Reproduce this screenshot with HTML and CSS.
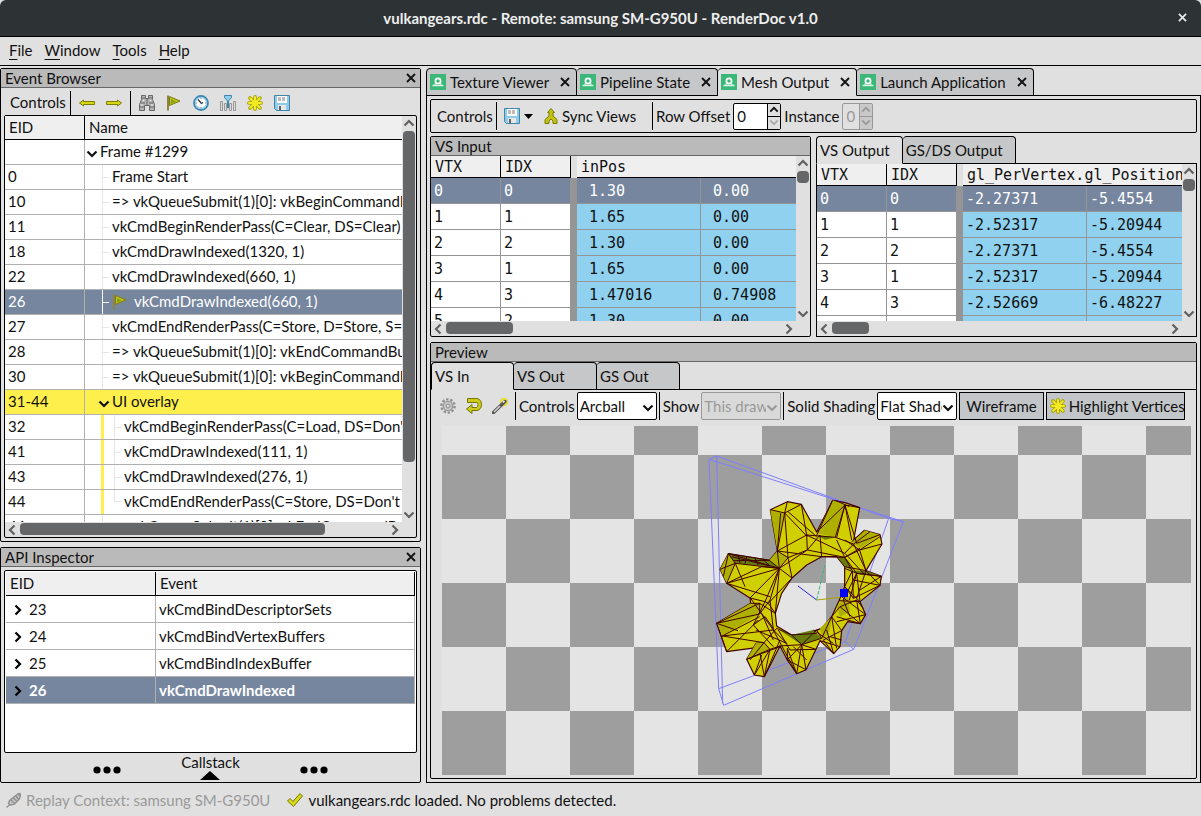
FILE: index.html
```
<!DOCTYPE html>
<html lang="en">
<head>
<meta charset="utf-8">
<title>vulkangears.rdc - Remote: samsung SM-G950U - RenderDoc v1.0</title>
<link rel="stylesheet" href="styles.css">
</head>
<body>
<svg class="defs" aria-hidden="true">
  <symbol id="x" viewBox="0 0 10 10"><path d="M1 1l8 8M9 1L1 9" fill="none" stroke="currentColor" stroke-width="1.8"/></symbol>
  <symbol id="down" viewBox="0 0 12 8"><path d="M1.500 1.500L6 6l4.500-4.500" fill="none" stroke="currentColor" stroke-width="2.200"/></symbol>
  <symbol id="up" viewBox="0 0 12 8"><path d="M1.500 6.500L6 2l4.500 4.500" fill="none" stroke="currentColor" stroke-width="2.200"/></symbol>
  <symbol id="left" viewBox="0 0 8 12"><path d="M6.500 1.500L2 6l4.500 4.500" fill="none" stroke="currentColor" stroke-width="2.200"/></symbol>
  <symbol id="right" viewBox="0 0 8 12"><path d="M1.500 1.500L6 6l-4.500 4.500" fill="none" stroke="currentColor" stroke-width="2.200"/></symbol>
  <symbol id="arrow-l" viewBox="0 0 16 16"><path d="M.5 8L4.500 5v1.500h11v3h-11V11z" fill="#d6d614" stroke="#7d7d00"/></symbol>
  <symbol id="arrow-r" viewBox="0 0 16 16"><path d="M15.500 8L11.500 5v1.500H.5v3h11V11z" fill="#d6d614" stroke="#7d7d00"/></symbol>
  <symbol id="find" viewBox="0 0 16 16"><path d="M2.500.5h4v3h3v-3h4v4l2 5v6h-5v-5h-5v5h-5v-6l2-5z" fill="#b5b5b5" stroke="#666"/><path d="M3 3h3M10 3h3M2 8h4M10 8h4M1 12h4M11 12h4M8 4v6" stroke="#666" fill="none"/><path d="M2 10h2M12 10h2M4 5.500h1M11 5.500h1" stroke="#eee"/></symbol>
  <symbol id="flag" viewBox="0 0 16 16"><path d="M3.500 1.500l10.500 4.500-10.500 4.500z" fill="#bfc21a" stroke="#7e7d10"/><path d="M5 4l5 2.500L5 9z" fill="#8aa016"/><path d="M2 .5v15" stroke="#8c8440" stroke-width="2"/></symbol>
  <symbol id="clock" viewBox="0 0 16 16"><circle cx="8" cy="8" r="7" fill="#fff" stroke="#3d86b0" stroke-width="1.800"/><circle cx="8" cy="8" r="5.600" fill="none" stroke="#8dc8e4" stroke-width="1.200"/><path d="M5 4.500l3.500 4M8.500 8.500l1.500-1" stroke="#333" stroke-width="1.200"/><path d="M8 3v1M8 12v1M3 8h1M12 8h1" stroke="#888"/></symbol>
  <symbol id="bars" viewBox="0 0 16 16"><path d="M.5 15.500v-9h2v9zM4.500 15.500v-7h2v7zM9.500 15.500v-7h2v7zM13.500 15.500v-9h2v9z" fill="#ddd" stroke="#999"/><path d="M4.500.5h7v2L8.500 6v7h-1V6l-3-3.500z" fill="#8dd0ee" stroke="#3c84ab"/></symbol>
  <symbol id="star" viewBox="0 0 16 16"><g stroke-linecap="round"><path d="M8 1.800v12.400M1.800 8h12.400M3 3l10 10M13 3L3 13" stroke="#a7a300" stroke-width="3.600"/><path d="M8 2v12M2 8h12M3.200 3.200l9.600 9.600M12.800 3.200l-9.600 9.600" stroke="#f2ea22" stroke-width="2"/></g></symbol>
  <symbol id="save" viewBox="0 0 16 16"><path d="M.5.5h15v15h-13l-2-2z" fill="#8dcbe8" stroke="#3f86ad"/><path d="M3 1h10v7H3z" fill="#fff"/><path d="M4 3h8M4 5h8" stroke="#777" stroke-dasharray="3 1"/><path d="M4 10h8v5H4z" fill="#e8e8e8"/><path d="M5 11h2v4H5z" fill="#59606a"/></symbol>
  <symbol id="sync" viewBox="0 0 14 16"><path d="M7 .5l3.500 4H9v3.500l4 3.500v4h-4V13l-2-2-2 2v2.500H1v-4L5 8V4.500H3.500z" fill="#c2c212" stroke="#7d7d00"/></symbol>
  <symbol id="gear" viewBox="0 0 16 16"><circle cx="8" cy="8" r="6.600" fill="none" stroke="#8f8f8f" stroke-width="2.400" stroke-dasharray="2.400 1.750"/><circle cx="8" cy="8" r="4.600" fill="#ccc" stroke="#999" stroke-width="1.400"/><circle cx="8" cy="8" r="2" fill="#ddd" stroke="#888"/></symbol>
  <symbol id="reset" viewBox="0 0 16 16"><path d="M1.500.5H11Q15.500 1.500 15.500 6.500T11 12.500H6v3L.5 11 6 6.500v3h4.500Q12 9 12 6.500T10.500 4.500h-9z" fill="#cccb1c" stroke="#777600"/></symbol>
  <symbol id="wand" viewBox="0 0 16 16"><circle cx="12" cy="4" r="3.400" fill="#eee8a0" stroke="#e8de20" stroke-width="1.600"/><path d="M1.500 14.500L13 3.500" stroke="#555" stroke-width="3.400" stroke-linecap="round"/><path d="M2 14L8 8.200" stroke="#ccc" stroke-width="1.600"/><path d="M11 4.500L12.500 3" stroke="#eee" stroke-width="1.600"/></symbol>
  <symbol id="plug" viewBox="0 0 16 16"><path d="M.5 15.500L4 12.500M3.500 8.500L9 4l3.500-2.500 2 1.500-1 4L8 12.500l-4 .5-1.500-1.500zM12.500 3.500l2-2.500M5 8l4 4M7.500 6l4 4M10 4l3 4" fill="#c4c4c4" stroke="#909090" stroke-width="1.300"/></symbol>
  <symbol id="tick" viewBox="0 0 16 16"><path d="M.5 9L3 6.500l3 3 7-8L15.500 4 6.500 14.500z" fill="#d8d81a" stroke="#777600"/></symbol>
  <symbol id="app" viewBox="0 0 16 16"><path d="M0 0h16v16H0z" fill="#3bb878"/><circle cx="8" cy="7" r="2.600" fill="none" stroke="#fff" stroke-width="1.700"/><path d="M2.500 11.500h11M4.500 10.500l1.500-1M11.500 10.500L10 9.500" stroke="#d8f3e5" stroke-width="1.300"/></symbol>
</svg>

<header class="titlebar">
  <h1>vulkangears.rdc - Remote: samsung SM-G950U - RenderDoc v1.0</h1>
  <button class="plain win-close" aria-label="Close window"><svg><use href="#x"/></svg></button>
</header>
<nav class="menubar">
  <button class="plain"><u>F</u>ile</button>
  <button class="plain"><u>W</u>indow</button>
  <button class="plain"><u>T</u>ools</button>
  <button class="plain"><u>H</u>elp</button>
</nav>

<main class="workspace">
  <div class="left">
    <section class="panel">
      <header class="panel-head"><h2>Event Browser</h2><button class="plain" aria-label="Close Event Browser"><svg class="ic-x"><use href="#x"/></svg></button></header>
      <div class="tools event-tools">
        <span class="label">Controls</span>
        <span class="group"><button class="plain" aria-label="Previous"><svg class="ic"><use href="#arrow-l"/></svg></button><button class="plain" aria-label="Next"><svg class="ic"><use href="#arrow-r"/></svg></button></span>
        <span class="group"><button class="plain" aria-label="Find"><svg class="ic"><use href="#find"/></svg></button><button class="plain" aria-label="Go to event"><svg class="ic"><use href="#flag"/></svg></button><button class="plain" aria-label="Time drawcalls"><svg class="ic"><use href="#clock"/></svg></button><button class="plain" aria-label="Columns"><svg class="ic"><use href="#bars"/></svg></button><button class="plain" aria-label="Bookmark"><svg class="ic"><use href="#star"/></svg></button><button class="plain" aria-label="Export"><svg class="ic"><use href="#save"/></svg></button></span>
      </div>
      <div class="scroller boxed event-box">
        <div class="clip">
          <table class="events">
            <colgroup><col class="c-eid"><col></colgroup>
            <thead><tr><th>EID</th><th>Name</th></tr></thead>
            <tbody>
              <tr><td></td><td><div class="name root"><svg class="chev"><use href="#down"/></svg><span>Frame #1299</span></div></td></tr>
              <tr><td>0</td><td><div class="name"><i class="guide"></i><span>Frame Start</span></div></td></tr>
              <tr><td>10</td><td><div class="name"><i class="guide"></i><span>=&gt; vkQueueSubmit(1)[0]: vkBeginCommandBuffer</span></div></td></tr>
              <tr><td>11</td><td><div class="name"><i class="guide"></i><span>vkCmdBeginRenderPass(C=Clear, DS=Clear)</span></div></td></tr>
              <tr><td>18</td><td><div class="name"><i class="guide"></i><span>vkCmdDrawIndexed(1320, 1)</span></div></td></tr>
              <tr><td>22</td><td><div class="name"><i class="guide"></i><span>vkCmdDrawIndexed(660, 1)</span></div></td></tr>
              <tr class="sel"><td>26</td><td><div class="name"><i class="guide"></i><svg class="ic"><use href="#flag"/></svg><span>vkCmdDrawIndexed(660, 1)</span></div></td></tr>
              <tr><td>27</td><td><div class="name"><i class="guide"></i><span>vkCmdEndRenderPass(C=Store, D=Store, S=Store)</span></div></td></tr>
              <tr><td>28</td><td><div class="name"><i class="guide"></i><span>=&gt; vkQueueSubmit(1)[0]: vkEndCommandBuffer</span></div></td></tr>
              <tr><td>30</td><td><div class="name"><i class="guide"></i><span>=&gt; vkQueueSubmit(1)[0]: vkBeginCommandBuffer</span></div></td></tr>
              <tr class="marker"><td>31-44</td><td><div class="name branch"><svg class="chev"><use href="#down"/></svg><span>UI overlay</span></div></td></tr>
              <tr class="in-marker"><td>32</td><td><div class="name child"><i class="guide"></i><span>vkCmdBeginRenderPass(C=Load, DS=Don't Care)</span></div></td></tr>
              <tr class="in-marker"><td>41</td><td><div class="name child"><i class="guide"></i><span>vkCmdDrawIndexed(111, 1)</span></div></td></tr>
              <tr class="in-marker"><td>43</td><td><div class="name child"><i class="guide"></i><span>vkCmdDrawIndexed(276, 1)</span></div></td></tr>
              <tr class="in-marker"><td>44</td><td><div class="name child last"><i class="guide"></i><span>vkCmdEndRenderPass(C=Store, DS=Don't Care)</span></div></td></tr>
              <tr><td>46</td><td><div class="name"><i class="guide"></i><span>=&gt; vkQueueSubmit(1)[0]: vkEndCommandBuffer</span></div></td></tr>
            </tbody>
          </table>
        </div>
        <div class="vbar"><svg class="ar"><use href="#up"/></svg><div class="track"><div class="thumb" style="height:88%"></div></div><svg class="ar"><use href="#down"/></svg></div>
        <div class="hbar"><svg class="ah"><use href="#left"/></svg><div class="track"><div class="thumb" style="width:83%"></div></div><svg class="ah"><use href="#right"/></svg></div>
      </div>
    </section>

    <section class="panel">
      <header class="panel-head"><h2>API Inspector</h2><button class="plain" aria-label="Close API Inspector"><svg class="ic-x"><use href="#x"/></svg></button></header>
      <div class="boxed api-box">
        <table class="api">
          <colgroup><col class="c-api"><col></colgroup>
          <thead><tr><th>EID</th><th>Event</th></tr></thead>
          <tbody>
            <tr><td><svg class="chev-r"><use href="#right"/></svg>23</td><td>vkCmdBindDescriptorSets</td></tr>
            <tr><td><svg class="chev-r"><use href="#right"/></svg>24</td><td>vkCmdBindVertexBuffers</td></tr>
            <tr><td><svg class="chev-r"><use href="#right"/></svg>25</td><td>vkCmdBindIndexBuffer</td></tr>
            <tr class="sel"><td><svg class="chev-r"><use href="#right"/></svg>26</td><td>vkCmdDrawIndexed</td></tr>
          </tbody>
        </table>
      </div>
      <button class="plain callstack">
        <svg class="dots" viewBox="0 0 28 8"><circle cx="4" cy="4" r="3.600"/><circle cx="14" cy="4" r="3.600"/><circle cx="24" cy="4" r="3.600"/></svg>
        <span class="cs-mid">Callstack<svg class="tri" viewBox="0 0 20 9"><path d="M0 9L10 0l10 9z"/></svg></span>
        <svg class="dots" viewBox="0 0 28 8"><circle cx="4" cy="4" r="3.600"/><circle cx="14" cy="4" r="3.600"/><circle cx="24" cy="4" r="3.600"/></svg>
      </button>
    </section>
  </div>

  <div class="right">
    <div class="tabs dock-tabs">
      <div class="tab"><button class="plain"><svg class="ic"><use href="#app"/></svg>Texture Viewer</button><button class="plain" aria-label="Close Texture Viewer"><svg class="ic-x"><use href="#x"/></svg></button></div>
      <div class="tab"><button class="plain"><svg class="ic"><use href="#app"/></svg>Pipeline State</button><button class="plain" aria-label="Close Pipeline State"><svg class="ic-x"><use href="#x"/></svg></button></div>
      <div class="tab active"><button class="plain"><svg class="ic"><use href="#app"/></svg>Mesh Output</button><button class="plain" aria-label="Close Mesh Output"><svg class="ic-x"><use href="#x"/></svg></button></div>
      <div class="tab"><button class="plain"><svg class="ic"><use href="#app"/></svg>Launch Application</button><button class="plain" aria-label="Close Launch Application"><svg class="ic-x"><use href="#x"/></svg></button></div>
    </div>
    <div class="pane">
      <div class="tools mesh-tools">
        <span class="label">Controls</span>
        <span class="group views"><button class="plain save-menu" aria-label="Export"><svg class="ic"><use href="#save"/></svg><svg class="caret" viewBox="0 0 9 5"><path d="M0 0h9L4.500 5z"/></svg></button><button class="plain sync"><svg class="ic"><use href="#sync"/></svg>Sync Views</button></span>
        <span class="group rows">
          <label for="row-offset">Row Offset</label>
          <span class="spin row-spin"><input id="row-offset" type="text" value="0"><span class="steps"><button class="plain" aria-label="Increase row offset"><svg><use href="#up"/></svg></button><button class="plain faint" aria-label="Decrease row offset"><svg><use href="#down"/></svg></button></span></span>
          <label for="instance">Instance</label>
          <span class="spin inst-spin off"><input id="instance" type="text" value="0" disabled><span class="steps"><button class="plain" disabled aria-label="Increase instance"><svg><use href="#up"/></svg></button><button class="plain" disabled aria-label="Decrease instance"><svg><use href="#down"/></svg></button></span></span>
        </span>
      </div>

      <div class="buffers">
        <section class="panel">
          <header class="panel-head"><h2>VS Input</h2></header>
          <div class="scroller">
            <div class="clip">
              <table class="mesh">
                <colgroup><col class="c-id"><col class="c-id"><col class="c-bar"><col class="c-val"><col class="c-val"></colgroup>
                <thead><tr><th>VTX</th><th>IDX</th><th class="bar"></th><th colspan="2">inPos</th></tr></thead>
                <tbody>
                  <tr class="sel"><td>0</td><td>0</td><td class="bar"></td><td> 1.30</td><td> 0.00</td></tr>
                  <tr><td>1</td><td>1</td><td class="bar"></td><td> 1.65</td><td> 0.00</td></tr>
                  <tr><td>2</td><td>2</td><td class="bar"></td><td> 1.30</td><td> 0.00</td></tr>
                  <tr><td>3</td><td>1</td><td class="bar"></td><td> 1.65</td><td> 0.00</td></tr>
                  <tr><td>4</td><td>3</td><td class="bar"></td><td> 1.47016</td><td> 0.74908</td></tr>
                  <tr><td>5</td><td>2</td><td class="bar"></td><td> 1.30</td><td> 0.00</td></tr>
                </tbody>
              </table>
            </div>
            <div class="vbar"><svg class="ar"><use href="#up"/></svg><div class="track"><div class="thumb"></div></div><svg class="ar"><use href="#down"/></svg></div>
            <div class="hbar"><svg class="ah"><use href="#left"/></svg><div class="track"><div class="thumb" style="width:20%"></div></div><svg class="ah"><use href="#right"/></svg></div>
          </div>
        </section>
        <section class="tabbed">
          <div class="tabs out-tabs"><button class="tab active">VS Output</button><button class="tab">GS/DS Output</button></div>
          <div class="scroller tab-body">
            <div class="clip">
              <table class="mesh">
                <colgroup><col class="c-id"><col class="c-id"><col class="c-bar"><col class="c-val"><col class="c-val"></colgroup>
                <thead><tr><th>VTX</th><th>IDX</th><th class="bar"></th><th colspan="2">gl_PerVertex.gl_Position</th></tr></thead>
                <tbody>
                  <tr class="sel"><td>0</td><td>0</td><td class="bar"></td><td>-2.27371</td><td>-5.4554</td></tr>
                  <tr><td>1</td><td>1</td><td class="bar"></td><td>-2.52317</td><td>-5.20944</td></tr>
                  <tr><td>2</td><td>2</td><td class="bar"></td><td>-2.27371</td><td>-5.4554</td></tr>
                  <tr><td>3</td><td>1</td><td class="bar"></td><td>-2.52317</td><td>-5.20944</td></tr>
                  <tr><td>4</td><td>3</td><td class="bar"></td><td>-2.52669</td><td>-6.48227</td></tr>
                  <tr><td></td><td></td><td class="bar"></td><td></td><td></td></tr>
                </tbody>
              </table>
            </div>
            <div class="vbar"><svg class="ar"><use href="#up"/></svg><div class="track"><div class="thumb"></div></div><svg class="ar"><use href="#down"/></svg></div>
            <div class="hbar"><svg class="ah"><use href="#left"/></svg><div class="track"><div class="thumb" style="width:11%"></div></div><svg class="ah"><use href="#right"/></svg></div>
          </div>
        </section>
      </div>

      <section class="panel preview">
        <header class="panel-head"><h2>Preview</h2></header>
        <div class="tabs pre-tabs"><button class="tab active">VS In</button><button class="tab">VS Out</button><button class="tab">GS Out</button></div>
        <div class="tools pre-tools">
          <span class="icons"><button class="plain" aria-label="Options"><svg class="ic"><use href="#gear"/></svg></button><button class="plain" aria-label="Reset camera"><svg class="ic"><use href="#reset"/></svg></button><button class="plain" aria-label="Auto-fit"><svg class="ic"><use href="#wand"/></svg></button></span>
          <span class="group"><label for="cam">Controls</label><span class="pick"><select id="cam"><option>Arcball</option></select><svg><use href="#down"/></svg></span></span>
          <span class="group"><label for="show">Show</label><span class="pick off"><select id="show" disabled><option>This draw</option></select><svg><use href="#down"/></svg></span></span>
          <span class="group"><label for="shade">Solid Shading</label><span class="pick"><select id="shade"><option>Flat Shaded</option></select><svg><use href="#down"/></svg></span></span>
          <button class="toggle">Wireframe</button>
          <button class="toggle wide"><svg class="ic"><use href="#star"/></svg>Highlight Vertices</button>
        </div>
        <div class="viewport">
          <svg class="scene" viewBox="0 0 749 349" role="img" aria-label="Gear mesh preview">
            <g transform="translate(248 14) scale(.33333)" stroke-linejoin="round" fill="none">
              <g stroke="#7d7dff" stroke-width="3">
                <path d="M57 58L80 48 596 235 640 245 491 628 101 796 86 746 57 58M57 58L640 245M80 48L98 790M596 235L466 605 491 628M466 605L86 746"/>
              </g>
              <path fill="#d0cf00" fill-rule="evenodd" stroke="#400000" stroke-width="3.500" d="M241 209L292 185 334 193 380 276 428 181 465 188 509 203 491 300 523 271 570 284 576 312 528 392 574 409 570 436 510 485 527 524 511 551 473 545 455 572 450 620 431 641 390 602 378 628 348 689 320 701 292 660 270 618 223 710 193 705 170 658 198 610 222 608 205 622 110 635 80 550 182 490 180 474 110 430 90 388 115 341 238 361 262 333ZM395 350L350 375 306 414 275 460 256 520 260 558 305 585 350 580 395 565 425 530 447 482 464 440 464 380 440 350Z"/>
              <g fill="#aeb000">
                <path d="M241 209L284 219 262 333zM428 181L465 195 436 292 380 280zM80 550L182 490 209 490 209 522 97 588zM170 658L198 610 222 608 240 628zM90 388L115 341 136 370 110 430zM485 305L523 271 570 284 510 325zM440 500L473 460 480 515 450 530zM390 565L425 530 420 570 400 600zM238 361L262 333 292 350 268 385z"/>
              </g>
              <g fill="#677c0a">
                <path d="M115 341L238 361 268 385 136 370zM441 350L464 352 487 392 528 392 574 409 500 400 466 380zM265 568L305 585 370 570 395 595 335 614zM380 285L436 292 405 299z"/>
              </g>
              <path stroke="#400000" stroke-width="3" d="M115 341L268 385M125 350L240 378M130 362L238 361M145 347L150 369M170 351L165 371M195 355L205 376M220 359L240 378M241 209L284 219 334 193M292 185L284 219 262 333M284 219L294 353M284 219L352 290M272 220L262 333M334 193L350 285M294 215L380 290M262 333L350 285 436 292 491 312M262 333L395 350 464 352 487 392M262 333L294 353 352 330 350 285M352 330L390 285 395 350M352 330L464 352M350 285L464 340M380 276L465 195 436 292M428 181L380 286M465 195L509 203M465 195L500 310M465 195L485 300M465 195L440 292M436 181L478 200M465 300L509 330 576 312M485 305L523 271M500 310L570 284M491 312L540 275M491 312L528 392M464 352L509 330 528 392M464 340L491 312M440 300L464 352 510 325M570 290L509 330M115 341L238 361 268 385 136 370 115 341M136 370L90 388M136 370L110 430 268 385M115 341L100 410M110 430L240 470M136 370L165 440M268 385L215 380 110 430M268 385L180 474M268 385L225 485M268 385L240 480M268 385L306 414 235 490M268 385L256 520M268 385L294 353 306 414M268 385L352 330M262 333L268 385M180 474L225 485 235 490 256 520M182 490L209 490 209 522M182 475L250 570M209 490L80 550 209 522M97 588L209 530M80 550L144 572M80 550L110 635M97 588L250 570M110 635L205 540M97 588L222 608M225 485L190 555M209 522L240 480M209 490L256 520M190 555L250 620M190 555L225 530 250 565M215 520L250 600M240 480L250 570 290 610M198 570L290 610M222 608L260 565 305 585 335 614 395 595M170 658L240 628 223 710M170 658L270 620M193 705L240 628M180 660L222 608 240 628M210 640L223 710M270 600L223 710M240 628L270 618 335 614M193 705L215 645M250 570L320 701M292 625L292 660 335 614 348 689M292 625L320 701M292 660L348 689M265 570L300 630 378 628M320 701L335 614 378 628M310 620L350 660M335 614L380 570 395 595 425 530M305 585L380 580M370 570L430 610M390 602L450 620M400 600L431 641M410 570L431 641M425 530L455 572 400 600M425 530L440 625M420 590L455 600M440 530L511 551M440 545L527 524M425 530L450 500 511 551M464 440L510 485M455 470L527 524M450 500L500 480 511 551M447 482L510 485M464 440L490 475 570 436M464 352L500 400 574 409M487 392L464 440M500 400L510 485M487 392L490 475M528 392L500 475M528 392L570 436M490 420L570 436M500 400L574 409M464 385L500 400 460 480 480 530M500 400L478 480M464 380L528 392M500 480L520 505M510 450L574 409M465 340L525 405"/>
              <path stroke="#2424d0" stroke-width="3" d="M324 438L380 480"/>
              <path stroke="#3bb878" stroke-width="3" d="M380 480L405 373" stroke-dasharray="12 4"/>
              <path stroke="#aaa400" stroke-width="3" d="M380 480L450 472"/>
              <path fill="#0000f0" d="M450 447h24v24h-24z"/>
            </g>
          </svg>
        </div>
      </section>
    </div>
  </div>
</main>

<footer class="status">
  <span class="ctx"><svg class="ic"><use href="#plug"/></svg>Replay Context: samsung SM-G950U</span>
  <span class="msg"><svg class="ic"><use href="#tick"/></svg>vulkangears.rdc loaded. No problems detected.</span>
</footer>
</body>
</html>
```
FILE: styles.css
```
* { box-sizing: border-box; }
html, body { height: 100%; }
body {
  margin: 0;
  display: flex;
  flex-direction: column;
  background: #e0e0e0;
  color: #111;
  font: 15px/20px Lato, "Noto Sans", sans-serif;
  white-space: nowrap;
}
h1, h2 { margin: 0; font: inherit; }
svg { display: block; flex: none; }
.defs { position: absolute; width: 0; height: 0; }
button, input, select { font: inherit; color: inherit; }
.plain { display: flex; align-items: center; padding: 0; border: 0; background: none; }
.ic { width: 16px; height: 16px; }
.ic-x { width: 10px; height: 10px; }

.titlebar {
  flex: none;
  display: grid;
  grid-template-columns: 1fr auto 1fr;
  align-items: center;
  height: 37px;
  padding-bottom: 1px;
  border-bottom: 1px solid #000;
  border-radius: 6px 6px 0 0;
  background: #2d3234;
  color: #eee;
}
.titlebar h1 { grid-column: 2; font-weight: bold; }
.win-close { justify-self: end; margin-right: 14px; }
.win-close svg { width: 9px; height: 9px; }

.menubar {
  flex: none;
  display: flex;
  gap: 12px;
  height: 29px;
  padding: 0 9px 2px;
  border-bottom: 1px solid #000;
}
.menubar .plain { display: block; }
.menubar u { text-underline-offset: 3px; }

.workspace {
  flex: 1;
  min-height: 0;
  display: grid;
  grid-template-columns: minmax(300px, 421px) minmax(0, 1fr);
  gap: 5px;
  padding-top: 2px;
}
.left {
  min-height: 0;
  display: grid;
  grid-template-rows: minmax(0, 1fr) 236px;
  gap: 5px;
}
.panel {
  display: flex;
  flex-direction: column;
  min-width: 0;
  min-height: 0;
  border: 1px solid #000;
  border-radius: 2px;
}
.panel-head {
  flex: none;
  display: flex;
  justify-content: space-between;
  align-items: center;
  height: 19px;
  padding: 0 4px;
  border-bottom: 1px solid #666;
  background: #bababa;
}

.tools { flex: none; display: flex; align-items: center; }
.tools .group { display: flex; align-items: center; align-self: stretch; border-left: 1px solid #000; }
.event-tools { height: 27px; padding: 3px 8px 0 9px; }
.event-tools .label { width: 60px; padding-bottom: 2px; }
.event-tools .group { gap: 11px; padding: 0 8px; }

.scroller {
  flex: 1;
  min-height: 0;
  display: grid;
  grid-template-columns: minmax(0, 1fr) 14px;
  grid-template-rows: minmax(0, 1fr) 15px;
}
.boxed { border: 1px solid #000; border-radius: 2px; }
.event-box { margin: 0 3px 3px; }
.clip { min-height: 0; overflow: hidden; }
.vbar { min-height: 0; display: flex; flex-direction: column; align-items: center; padding: 3px 0; color: #5f6163; }
.hbar { display: flex; align-items: center; padding: 0 3px; color: #5f6163; }
.ar { width: 12px; height: 8px; }
.ah { width: 8px; height: 12px; }
.track { flex: 1; align-self: stretch; min-width: 0; min-height: 0; }
.vbar .track { padding: 4px 1px; }
.hbar .track { padding: 1px 4px; }
.thumb { height: 12px; border-radius: 4px; background: #646668; }

table { border-collapse: separate; border-spacing: 0; table-layout: fixed; width: 100%; }
th { text-align: left; font-weight: normal; background: #efefef; border-bottom: 1px solid #000; }
th, td { padding: 0 4px 2px; overflow: hidden; }
td { background: #fff; border-bottom: 1px solid #b0b0b0; }
th:not(:last-child) { border-right: 1px solid #000; }
td:not(:last-child) { border-right: 1px solid #b0b0b0; }
.sel td { background: #76869f; color: #fff; }

.c-eid { width: 80px; }
.events th { height: 24px; }
.events td { height: 25px; }
.events td:first-child { padding-left: 3px; }
.events td:last-child { padding: 0; }
.name { display: flex; align-items: center; height: 24px; padding-left: 17px; }
.name span { padding-bottom: 2px; }
.name.root { padding-left: 1px; }
.name.branch { padding-left: 13px; }
.name.child { margin-left: 16px; padding-left: 10px; border-left: 3px solid #ffef4c; }
.in-marker td:last-child { background: linear-gradient(#ffef4c, #ffef4c) 16px 0 / 3px 100% no-repeat border-box #fff; }
.chev { width: 12px; height: 8px; margin: 4px 2px 0 0; }
.guide { flex: none; display: flex; align-items: center; align-self: stretch; width: 10px; border-left: 1px solid #e6e6e6; }
.guide::after { content: ""; width: 6px; border-top: 1px solid #e6e6e6; }
.last .guide { height: 12px; align-items: flex-end; align-self: flex-start; }
.sel .guide, .sel .guide::after { border-color: #fff; }
.name .ic { margin-right: 6px; }
.marker td { background: #ffef4c; }

.api-box { flex: 1; margin: 3px 3px 0; padding: 1px; background: #fff; }
.c-api { width: 150px; }
.api th { height: 24px; }
.api th:last-child { border-right: 1px solid #000; }
.api td:last-child { border-right: 1px solid #b0b0b0; padding-left: 3px; }
.api td { height: 27px; padding-bottom: 1px; }
.api td:first-child { padding-left: 8px; }
.chev-r { display: inline-block; width: 8px; height: 12px; margin-right: 7px; vertical-align: -1px; color: #000; }
.api .sel { font-weight: bold; }
.callstack { flex: none; align-items: flex-start; justify-content: center; gap: 60px; height: 29px; }
.dots { width: 28px; height: 8px; margin-top: 13px; }
.cs-mid { display: flex; flex-direction: column; align-items: center; line-height: 18px; }
.tri { width: 20px; height: 9px; }

.right { min-width: 0; min-height: 0; display: flex; flex-direction: column; }
.tabs { flex: none; display: flex; align-items: flex-end; height: 28px; }
.tab {
  display: flex;
  align-items: center;
  height: 28px;
  padding: 0 4px 1px;
  border: 1px solid #000;
  border-radius: 4px 4px 0 0;
  background: #c6c7c9;
  color: #111;
}
.tab + .tab { border-left-width: 0; }
.tab.active { position: relative; background: #e0e0e0; border-bottom-color: #e0e0e0; }
.dock-tabs .tab { gap: 11px; padding: 0 6px 1px 3px; }
.dock-tabs .plain:first-child { gap: 4px; }
.pane {
  flex: 1;
  min-height: 0;
  display: flex;
  flex-direction: column;
  gap: 3px;
  margin-top: -1px;
  padding: 3px;
  border: 1px solid #000;
}
.mesh-tools { height: 34px; padding: 2px 6px; border: 1px solid #000; border-radius: 2px; }
.mesh-tools .label { width: 59px; padding-bottom: 1px; }
.views { width: 156px; padding-left: 7px; gap: 10px; }
.save-menu { gap: 4px; }
.caret { width: 9px; height: 5px; }
.sync { gap: 3px; }
.rows { padding-left: 3px; gap: 3px; }
.spin { display: flex; height: 27px; border: 1px solid #000; border-radius: 2px; background: #fff; }
.row-spin { width: 48px; }
.inst-spin { width: 31px; }
.spin input { flex: 1; min-width: 0; padding: 0 3px; border: 0; background: none; }
.steps { flex: none; display: flex; flex-direction: column; width: 13px; border-left: 1px solid #000; background: #e0e0e0; }
.steps .plain { flex: 1; justify-content: center; color: #111; }
.steps .plain + .plain { border-top: 1px solid #000; }
.steps svg { width: 10px; height: 7px; }
.steps .faint { color: #aaa; }
.off { border-color: #999; background: #e0e0e0; color: #999; }
.off .steps, .off .steps .plain + .plain { border-color: #999; }
.off .steps .plain { color: #999; background: #c9c9c9; }

.buffers {
  flex: none;
  display: grid;
  grid-template-columns: minmax(0, 1fr) minmax(0, 1fr);
  grid-template-rows: minmax(0, 1fr);
  gap: 5px;
  height: 201px;
  margin-bottom: 2px;
}
.tabbed { display: flex; flex-direction: column; min-width: 0; min-height: 0; }
.out-tabs .tab, .pre-tabs .tab { padding: 0 18px 1px 3px; }
.out-tabs .tab.active { padding-right: 12px; }
.out-tabs .tab + .tab { padding-right: 12px; }
.tab-body { margin-top: -1px; border: 1px solid #000; }
.mesh { font: 15px/20px "DejaVu Sans Mono", monospace; white-space: pre; width: 375px; }
.c-id { width: 70px; }
.c-bar { width: 6px; }
.c-val { width: 124px; }
.mesh th { height: 22px; padding: 0 4px; }
.mesh th:last-child { overflow: visible; }
.mesh td { height: 26px; padding: 0 3px; border-color: #959595; }
.mesh td:nth-child(n + 4) { background: #8fd1ef; }
.mesh tr.sel td { background: #76869f; }
.mesh td.bar, .mesh tr.sel td.bar { padding: 0; background: #959595; }
.mesh th.bar { padding: 0; border: 0; background: #e0e0e0; }

.preview { flex: 1; }
.preview .tabs { height: 28px; border-bottom: 1px solid #000; }
.preview .tab { width: 83px; margin-bottom: -1px; }
.pre-tools { height: 32px; margin: 0 11px 0 9px; padding: 2px 0; gap: 2px; overflow: hidden; }
.icons { display: flex; flex: none; gap: 10px; margin-right: 5px; }
.pre-tools .group { flex: none; padding-left: 3px; gap: 2px; }
.pre-tools label { padding-bottom: 1px; }
.pick { display: flex; align-items: center; width: 80px; height: 28px; border: 1px solid #000; border-radius: 2px; background: #fff; }
.pick.off { background: #d9d9d9; border-color: #999; }
.pick select { width: 64px; padding: 0 0 1px 2px; border: 0; background: none; appearance: none; overflow: hidden; opacity: 1; }
.pick svg { width: 12px; height: 8px; margin-top: 3px; }
.toggle { flex: none; display: flex; align-items: center; gap: 3px; height: 28px; padding: 0 6px 1px; border: 1px solid #000; background: #c3c6c9; }
.toggle.wide { flex: 1; min-width: 0; padding: 0 0 1px 3px; overflow: hidden; }
.viewport {
  flex: 1;
  min-height: 0;
  margin: 4px 5px 3px 11px;
  background: conic-gradient(#9e9e9e 0 25%, #e4e4e4 0 50%, #9e9e9e 0 75%, #e4e4e4 0) left bottom / 128px 128px;
}
.scene { width: 100%; height: 100%; }

.status { flex: none; display: flex; gap: 17px; height: 33px; padding: 0 6px; align-items: center; }
.status span { display: flex; align-items: center; gap: 5px; }
.status .ctx { color: #9a9a9a; gap: 4px; }
```
